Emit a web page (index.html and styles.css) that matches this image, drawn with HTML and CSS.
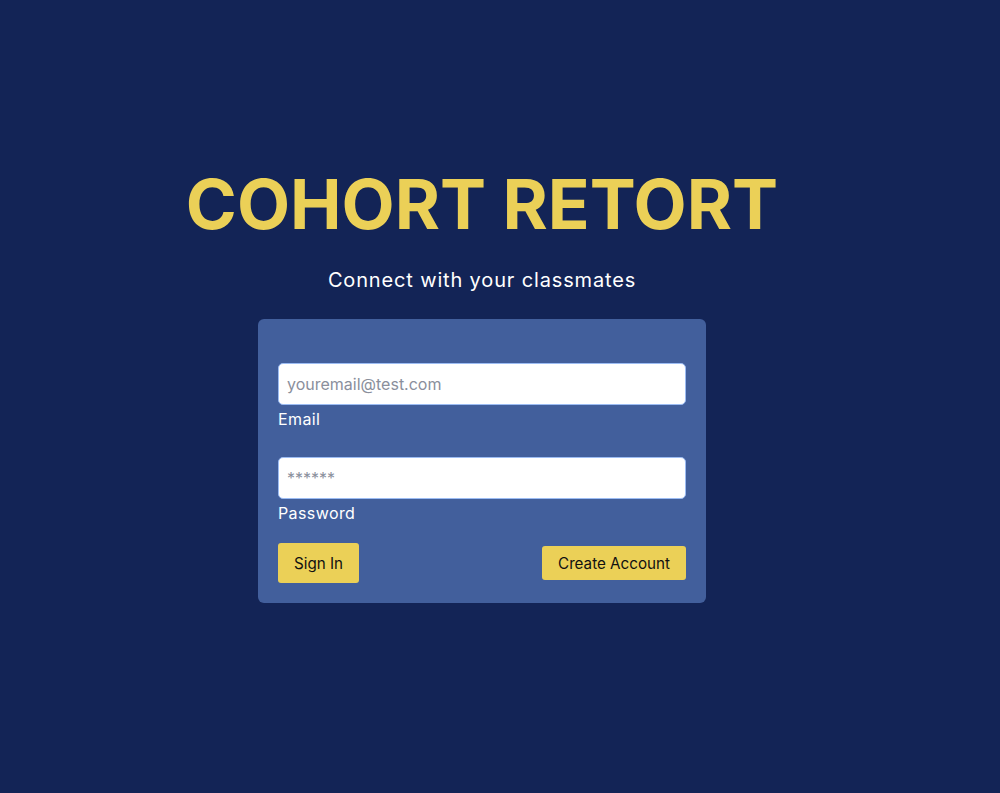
FILE: index.html
```html
<!DOCTYPE html>
<html lang="en">
<head>
<meta charset="utf-8">
<title>Cohort Retort</title>
<link rel="stylesheet" href="styles.css">
</head>
<body>
<main class="page">
  <h1 class="title">COHORT RETORT</h1>
  <p class="subtitle">Connect with your classmates</p>
  <form class="card">
    <div class="field">
      <input class="input" type="email" placeholder="youremail@test.com">
      <label class="label">Email</label>
    </div>
    <div class="field">
      <input class="input" type="password" placeholder="******">
      <label class="label">Password</label>
    </div>
    <div class="actions">
      <button type="button" class="btn btn-signin">Sign In</button>
      <button type="button" class="btn btn-create">Create Account</button>
    </div>
  </form>
</main>
</body>
</html>
```

FILE: styles.css
```css
html, body {
  margin: 0;
  padding: 0;
  background: #132456;
  height: 100%;
}
body {
  font-family: Inter, "Helvetica Neue", "Liberation Sans", sans-serif;
  color: #ffffff;
}
.page {
  display: flex;
  flex-direction: column;
  align-items: center;
  padding: 162px 36px 0 0;
}
.title {
  margin: 0;
  font-size: 69px;
  font-weight: 700;
  line-height: 84px;
  color: #ebd057;
  letter-spacing: 0;
}
.subtitle {
  margin: 22px 0 0 0;
  font-size: 20px;
  line-height: 24px;
  letter-spacing: 0.85px;
}
.card {
  margin-top: 27px;
  width: 408px;
  padding: 44px 20px 20px 20px;
  background: #425f9c;
  border-radius: 6px;
  display: flex;
  flex-direction: column;
}
.field {
  display: flex;
  flex-direction: column;
  margin-bottom: 28px;
}
.field + .field {
  margin-bottom: 20px;
}
.input {
  box-sizing: border-box;
  width: 100%;
  height: 42px;
  border: 1px solid #9cbcf3;
  border-radius: 5px;
  padding: 0 8px;
  font-family: inherit;
  font-size: 16px;
  color: #333;
  background: #fff;
  outline: none;
}
.input::placeholder {
  color: #8a8f9c;
}
.label {
  margin-top: 4px;
  font-size: 16px;
  line-height: 20px;
  letter-spacing: 0.4px;
  color: #fff;
}
.actions {
  display: flex;
  justify-content: space-between;
  align-items: center;
}
.btn {
  box-sizing: border-box;
  border: none;
  background: #ebd057;
  color: #111;
  font-family: inherit;
  font-size: 15.2px;
  white-space: nowrap;
  border-radius: 3px;
  padding: 0;
}
.btn-signin {
  height: 40px;
  width: 81px;
}
.btn-create {
  height: 34px;
  width: 144px;
}
```
